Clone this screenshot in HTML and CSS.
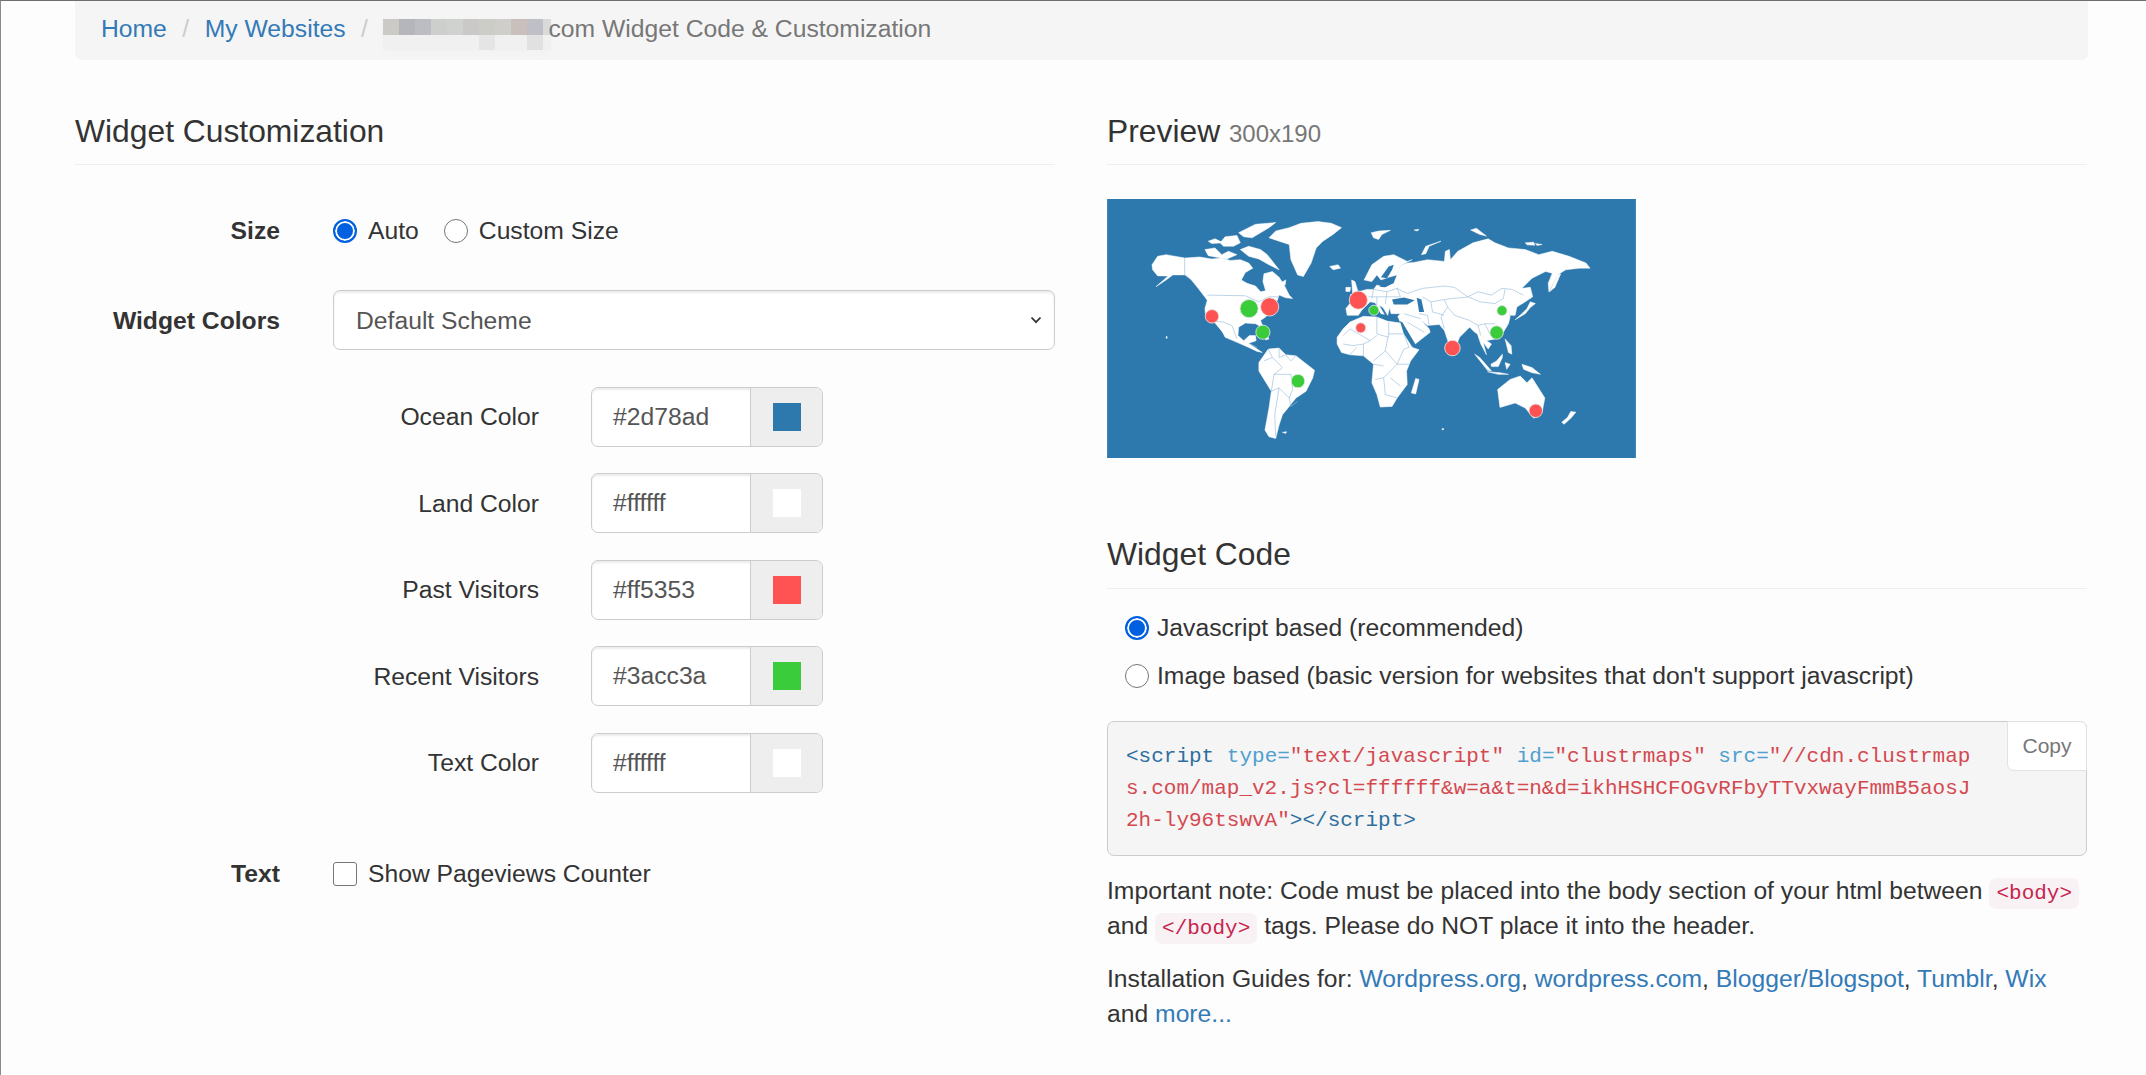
FILE: index.html
```html
<!DOCTYPE html>
<html lang="en">
<head>
    <meta charset="UTF-8">
    <title>Widget Code &amp; Customization</title>
    <link rel="stylesheet" href="styles.css">
</head>
<body>
    <div class="page">
        <ol class="breadcrumb">
            <li><a href="#">Home</a></li>
            <li class="sep">/</li>
            <li><a href="#">My Websites</a></li>
            <li class="sep">/</li>
            <li class="current"><span class="redact"><i></i><i></i><i></i><i></i><i></i><i></i><i></i><i></i><i></i><i></i><i></i><i></i><i></i><i></i><i></i><i></i><i></i><i></i><i></i><i></i><i></i><i></i></span>com Widget Code &amp; Customization</li>
        </ol>

        <div class="columns">
            <!-- left column -->
            <section class="col">
                <h3 class="section-title">Widget Customization</h3>

                <div class="form-row size-row">
                    <label class="row-label">Size</label>
                    <div class="radio-line">
                        <span class="radio checked"></span><span class="radio-text">Auto</span>
                        <span class="radio"></span><span class="radio-text">Custom Size</span>
                    </div>
                </div>

                <div class="form-row scheme-row">
                    <label class="row-label">Widget Colors</label>
                    <div class="select">
                        <span>Default Scheme</span>
                        <svg class="caret" width="12" height="8" viewBox="0 0 12 8"><path d="M1.5 1.5 L6 6.2 L10.5 1.5" fill="none" stroke="#333" stroke-width="1.8"/></svg>
                    </div>
                </div>

                <div class="colors">
                    <div class="color-row">
                        <label>Ocean Color</label>
                        <div class="color-input"><span class="value">#2d78ad</span><span class="addon"><i class="swatch ocean"></i></span></div>
                    </div>
                    <div class="color-row">
                        <label>Land Color</label>
                        <div class="color-input"><span class="value">#ffffff</span><span class="addon"><i class="swatch land"></i></span></div>
                    </div>
                    <div class="color-row">
                        <label>Past Visitors</label>
                        <div class="color-input"><span class="value">#ff5353</span><span class="addon"><i class="swatch past"></i></span></div>
                    </div>
                    <div class="color-row">
                        <label>Recent Visitors</label>
                        <div class="color-input"><span class="value">#3acc3a</span><span class="addon"><i class="swatch recent"></i></span></div>
                    </div>
                    <div class="color-row">
                        <label>Text Color</label>
                        <div class="color-input"><span class="value">#ffffff</span><span class="addon"><i class="swatch land"></i></span></div>
                    </div>
                </div>

                <div class="form-row text-row">
                    <label class="row-label">Text</label>
                    <div class="radio-line">
                        <span class="checkbox"></span><span class="radio-text">Show Pageviews Counter</span>
                    </div>
                </div>
            </section>

            <!-- right column -->
            <section class="col">
                <h3 class="section-title">Preview <small>300x190</small></h3>

                <svg class="map" width="529" height="259" viewBox="0 0 1568 768">
                    <rect width="1568" height="768" fill="#2d78ad"/>
                    <g class="land">
                        <!-- north america -->
                        <path d="M133,195 L150,170 L175,165 L230,175 L275,172 L310,178 L340,175 L365,182 L395,180 L420,190 L432,205 L410,218 L398,240 L415,250 L440,258 L455,275 L470,272 L462,245 L465,222 L490,215 L510,232 L525,255 L540,285 L550,295 L530,293 L510,285 L505,300 L490,325 L470,350 L455,360 L465,385 L480,415 L470,418 L455,378 L440,370 L410,368 L390,380 L388,405 L405,420 L422,405 L440,405 L442,420 L420,428 L445,445 L460,455 L445,452 L420,440 L385,425 L350,410 L335,380 L347,400 L320,368 L292,345 L290,325 L297,300 L270,265 L250,240 L232,225 L195,225 L175,240 L145,260 L170,238 L180,228 L150,228 L135,210 Z"/>
                        <path d="M480,115 L500,95 L540,85 L575,72 L625,67 L665,72 L695,85 L670,105 L640,125 L620,145 L605,190 L582,230 L565,225 L545,180 L540,135 L510,125 Z"/>
                        <path d="M390,100 L440,75 L500,70 L480,85 L455,100 L430,115 L405,112 Z"/>
                        <path d="M395,150 L420,140 L455,150 L475,165 L510,210 L480,195 L450,178 L420,170 Z"/>
                        <path d="M290,150 L320,145 L340,165 L360,155 L385,165 L355,178 L300,168 Z"/>
                        <path d="M300,125 L320,118 L345,130 L310,132 Z"/>
                        <path d="M335,130 L350,112 L385,108 L395,130 L375,140 L345,140 Z"/>
                        <path d="M515,248 L530,240 L528,255 Z"/>
                        <path d="M660,200 L685,195 L692,205 L670,210 Z"/>
                        <path d="M175,408 L178,408 L178,413 L175,413 Z"/>
                        <!-- south america -->
                        <path d="M450,485 L478,445 L510,442 L530,462 L560,465 L615,508 L610,530 L590,570 L560,590 L540,615 L520,640 L510,670 L500,710 L480,705 L468,685 L480,620 L487,570 L450,510 Z"/>
                        <path d="M520,692 L532,690 L530,695 Z"/>
                        <!-- africa -->
                        <path d="M682,410 L700,385 L720,365 L760,348 L800,350 L830,362 L870,368 L880,400 L905,440 L925,447 L900,480 L888,510 L890,550 L860,590 L845,615 L810,617 L800,580 L785,545 L790,490 L760,465 L720,462 L695,455 L682,430 Z"/>
                        <path d="M915,532 L925,535 L915,578 L902,575 Z"/>
                        <!-- eurasia -->
                        <path d="M708,325 L718,312 L735,310 L735,295 L720,285 L745,275 L770,268 L790,268 L800,255 L820,262 L850,250 L860,225 L870,197 L890,190 L910,188 L950,180 L1000,185 L1003,155 L1015,150 L1018,180 L1040,155 L1085,130 L1130,118 L1150,130 L1190,145 L1240,150 L1280,165 L1320,155 L1370,170 L1420,190 L1432,205 L1400,205 L1360,210 L1335,225 L1310,275 L1308,250 L1320,220 L1300,215 L1260,235 L1230,265 L1255,262 L1262,290 L1240,305 L1215,320 L1210,345 L1195,345 L1190,325 L1195,350 L1190,370 L1175,395 L1150,415 L1125,420 L1140,430 L1130,445 L1115,425 L1125,462 L1108,430 L1098,400 L1090,395 L1075,380 L1045,410 L1025,465 L1000,390 L985,372 L950,375 L930,358 L955,385 L958,395 L905,437 L895,420 L870,368 L862,348 L870,340 L842,340 L838,322 L832,345 L818,322 L806,315 L822,342 L812,340 L795,308 L780,305 L755,330 L745,345 L712,345 Z"/>
                        <path d="M762,240 L785,195 L820,170 L850,165 L890,185 L905,180 L870,197 L860,225 L835,232 L812,240 L800,225 L785,245 Z"/>
                        <path d="M725,240 L735,245 L745,278 L728,280 Z"/>
                        <path d="M708,262 L722,262 L720,274 L708,274 Z"/>
                        <path d="M783,100 L805,95 L840,93 L815,105 L805,120 L790,115 Z"/>
                        <path d="M910,92 L925,90 L920,95 Z"/>
                        <path d="M932,165 L945,140 L990,125 L955,140 L945,162 Z"/>
                        <path d="M1078,92 L1095,87 L1125,110 L1105,105 Z"/>
                        <path d="M1240,130 L1265,128 L1268,137 L1245,136 Z"/>
                        <path d="M1270,132 L1290,135 L1275,138 Z"/>
                        <path d="M1312,275 L1335,225 L1345,222 L1328,262 Z"/>
                        <path d="M1210,358 L1240,340 L1255,322 L1270,310 L1255,305 L1245,325 L1232,338 Z"/>
                        <path d="M1180,415 L1198,435 L1200,460 L1190,455 Z"/>
                        <path d="M1138,490 L1155,480 L1172,460 L1172,470 L1160,497 L1140,497 Z"/>
                        <path d="M1090,460 L1105,470 L1140,510 L1128,508 Z"/>
                        <path d="M1128,512 L1165,515 L1190,520 L1160,520 Z"/>
                        <path d="M1180,485 L1195,490 L1185,505 Z"/>
                        <path d="M1230,490 L1260,500 L1285,520 L1260,515 L1235,505 Z"/>
                        <path d="M993,681 L998,681 L998,684 L993,684 Z"/>
                        <!-- oceania -->
                        <path d="M1158,565 L1195,535 L1225,525 L1245,545 L1260,530 L1298,590 L1290,632 L1265,650 L1240,620 L1210,605 L1165,618 Z"/>
                        <path d="M1375,630 L1390,632 L1375,650 L1355,668 L1348,662 L1365,648 Z"/>
                    </g>
                    <g class="sea">
                        <path d="M845,298 L880,292 L912,300 L890,313 L850,313 Z"/>
                        <path d="M918,293 L932,298 L940,335 L925,335 L922,315 Z"/>
                        <path d="M808,260 L830,245 L845,235 L850,248 L825,262 Z"/>
                        <path d="M812,232 L835,200 L850,195 L845,210 L830,235 Z"/>
                        <path d="M868,362 L876,366 L915,432 L905,438 L880,398 Z"/>
                    </g>
                    <g class="border">
                        <path d="M230,175 L230,225 L250,240"/>
                        <path d="M297,285 L410,287 L450,305 L480,290 L510,290"/>
                        <path d="M305,360 L345,365 L370,375 L385,415"/>
                        <path d="M420,428 L445,440"/>
                        <path d="M478,445 L490,470 L465,480 M510,442 L510,470 L530,462 M490,470 L520,500 L495,520 L487,570 L510,560 L540,590 L545,615 L565,600 M495,520 L545,520 L550,565 L540,590 M510,560 L497,640 L500,705 M530,462 L545,480 L560,465"/>
                        <path d="M720,385 L755,405 L780,420 L800,405 M800,350 L800,400 L835,410 M835,365 L835,400 L880,400 M835,400 L825,450 L790,480 M700,430 L730,435 L760,430 L780,420 M720,462 L740,440 M760,465 L760,430 M825,450 L860,490 L820,530 L795,535 M860,490 L895,490 M820,530 L825,580 L860,590 M840,530 L870,555 M880,400 L895,440 M860,490 L880,445 L895,440 M790,490 L820,495 M700,405 L720,385"/>
                        <path d="M935,265 L965,262 L1000,258 L1030,262 L1055,280 L1070,290 L1100,275 L1140,285 L1170,265 L1200,268 L1235,285"/>
                        <path d="M1070,290 L1105,305 L1150,310 L1175,295 L1180,268"/>
                        <path d="M935,290 L960,305 L990,300 L1020,295 L1060,292 L1070,290 M960,305 L965,335 L1000,345 M1000,300 L1010,320 L990,350 L1000,385 M1010,320 L1030,345 L1075,360 L1100,375 L1120,370 L1150,370 M1120,370 L1135,400 M1100,375 L1108,405"/>
                        <path d="M925,340 L950,345 L955,375 M880,340 L930,355 M890,365 L940,395"/>
                        <path d="M790,268 L830,275 L860,265 L890,280 L935,265 M800,290 L870,290 M830,275 L825,310 M860,265 L870,290 M775,290 L800,290 L800,315 M790,268 L785,295"/>
                    </g>
                    <circle cx="311" cy="348" r="20" class="dot past"/>
                    <circle cx="421" cy="325" r="27" class="dot recent"/>
                    <circle cx="482" cy="320" r="27" class="dot past"/>
                    <circle cx="462" cy="395" r="21" class="dot recent"/>
                    <circle cx="566" cy="540" r="20" class="dot recent"/>
                    <circle cx="745" cy="300" r="27" class="dot past"/>
                    <circle cx="791" cy="330" r="15" class="dot recent"/>
                    <circle cx="752" cy="382" r="15" class="dot past"/>
                    <circle cx="1171" cy="331" r="15" class="dot recent"/>
                    <circle cx="1155" cy="396" r="20" class="dot recent"/>
                    <circle cx="1024" cy="442" r="23" class="dot past"/>
                    <circle cx="1271" cy="628" r="20" class="dot past"/>
                </svg>

                <h3 class="section-title code-title">Widget Code</h3>

                <div class="code-options">
                    <div class="radio-line"><span class="radio checked"></span><span class="radio-text">Javascript based (recommended)</span></div>
                    <div class="radio-line"><span class="radio"></span><span class="radio-text">Image based (basic version for websites that don't support javascript)</span></div>
                </div>

                <div class="code-box">
                    <button class="copy">Copy</button>
                    <pre><span class="tag">&lt;script</span> <span class="attr">type=</span><span class="val">"text/javascript"</span> <span class="attr">id=</span><span class="val">"clustrmaps"</span> <span class="attr">src=</span><span class="val">"//cdn.clustrmap</span><span class="val">s.com/map_v2.js?cl=ffffff&amp;w=a&amp;t=n&amp;d=ikhHSHCFOGvRFbyTTvxwayFmmB5aosJ</span><span class="val">2h-ly96tswvA"</span><span class="tag">&gt;&lt;/script&gt;</span></pre>
                </div>

                <p class="note">Important note: Code must be placed into the body section of your html between <code>&lt;body&gt;</code> and <code>&lt;/body&gt;</code> tags. Please do NOT place it into the header.</p>
                <p class="note">Installation Guides for: <a href="#">Wordpress.org</a>, <a href="#">wordpress.com</a>, <a href="#">Blogger/Blogspot</a>, <a href="#">Tumblr</a>, <a href="#">Wix</a> and <a href="#">more...</a></p>
            </section>
        </div>
    </div>
</body>
</html>
```

FILE: styles.css
```css
body {
    margin: 0;
    height: 1075px;
    overflow: hidden;
    box-sizing: border-box;
    background: #fdfdfd;
    border-top: 1px solid #6f6f6f;
    border-left: 1px solid #8a8a8a;
    font-family: "Liberation Sans", Arial, sans-serif;
    font-size: 24.7px;
    line-height: 35px;
    color: #333;
}
a {
    color: #337ab7;
    text-decoration: none;
}
.page {
    padding: 0 58px 0 74px;
}

/* breadcrumb */
.breadcrumb {
    display: flex;
    align-items: center;
    box-sizing: border-box;
    height: 59px;
    margin: 0 0 51px;
    padding: 0 26px 4px;
    list-style: none;
    background: #f5f5f5;
    border-radius: 0 0 7px 7px;
}
.breadcrumb li {
    white-space: nowrap;
}
.breadcrumb .sep {
    margin: 0 15.5px;
    color: #ccc;
}
.breadcrumb .current {
    display: flex;
    align-items: center;
    color: #777;
}
.redact {
    display: grid;
    grid-template-columns: repeat(10, 16px) 8px;
    grid-template-rows: 16px 15px;
    margin: 12px -3px 0 0;
    border-radius: 0 0 8px 8px;
    box-shadow: 0 4px 6px #f2f2f2;
}
.redact i:nth-child(1) { background: #cbcac7; }
.redact i:nth-child(2) { background: #b4b6bc; }
.redact i:nth-child(3) { background: #bcbdc3; }
.redact i:nth-child(4) { background: #cdcfcd; }
.redact i:nth-child(5) { background: #d0d2d0; }
.redact i:nth-child(6) { background: #cbc9c7; }
.redact i:nth-child(7) { background: #cdcdc8; }
.redact i:nth-child(8) { background: #cfcecb; }
.redact i:nth-child(9) { background: #c9c0bd; }
.redact i:nth-child(10) { background: #bfbfc8; }
.redact i:nth-child(11) { background: #d9dbd9; }
.redact i:nth-child(n+12) { background: #f0f0f0; }
.redact i:nth-child(18) { background: #e5e5e5; }
.redact i:nth-child(21) { background: #e0e1e0; }

/* columns */
.columns {
    display: grid;
    grid-template-columns: 980px 980px;
    column-gap: 52px;
}
.section-title {
    margin: 0 0 34px;
    padding-bottom: 13px;
    border-bottom: 1px solid #eee;
    font-size: 31.8px;
    font-weight: 400;
    line-height: 40px;
    color: #333;
}
.section-title small {
    font-size: 24px;
    line-height: 1;
    color: #777;
}

/* left form */
.form-row {
    display: grid;
    grid-template-columns: 205px 1fr;
    column-gap: 53px;
    align-items: center;
}
.row-label {
    font-weight: 700;
    text-align: right;
}
.size-row {
    margin: 48px 0 42px;
}
.scheme-row {
    margin-bottom: 36.5px;
}
.text-row {
    margin-top: 63.5px;
}
.radio-line {
    display: flex;
    align-items: center;
}
.radio {
    flex: none;
    box-sizing: border-box;
    width: 24px;
    height: 24px;
    border: 1px solid #767676;
    border-radius: 50%;
    background: #fff;
}
.radio.checked {
    border: 2px solid #0060df;
    background: #0060df;
    box-shadow: inset 0 0 0 2px #fff;
}
.radio-text {
    margin: 0 25px 0 11px;
}
.checkbox {
    flex: none;
    box-sizing: border-box;
    width: 24px;
    height: 24px;
    border: 1px solid #767676;
    border-radius: 3px;
    background: #fff;
}
.select {
    display: flex;
    align-items: center;
    justify-content: space-between;
    box-sizing: border-box;
    height: 60px;
    padding: 0 12px 0 22px;
    background: #fff;
    border: 1px solid #ccc;
    border-radius: 7px;
    box-shadow: inset 0 2px 2px rgba(0,0,0,.075);
    color: #555;
}

/* colour pickers */
.colors {
    display: grid;
    row-gap: 26.6px;
}
.color-row {
    display: grid;
    grid-template-columns: 464px 232px;
    column-gap: 52px;
    align-items: center;
}
.color-row label {
    text-align: right;
}
.color-input {
    display: flex;
    box-sizing: border-box;
    height: 60px;
    background: #fff;
    border: 1px solid #ccc;
    border-radius: 7px;
    box-shadow: inset 0 2px 2px rgba(0,0,0,.075);
    overflow: hidden;
}
.color-input .value {
    flex: 1;
    padding-left: 21px;
    line-height: 58px;
    color: #555;
}
.addon {
    display: flex;
    align-items: center;
    justify-content: center;
    width: 71px;
    background: #eee;
    border-left: 1px solid #ccc;
}
.swatch {
    display: block;
    width: 28px;
    height: 28px;
}
.ocean { background: #2d78ad; }
.land { background: #fff; }
.past { background: #ff5353; }
.recent { background: #3acc3a; }

/* map */
.map {
    display: block;
    margin-bottom: 76px;
    filter: blur(.35px);
}
.land path {
    fill: #fff;
    stroke: #fff;
    stroke-width: 1.5;
    stroke-linejoin: round;
}
.sea path {
    fill: #2d78ad;
}
.border path {
    fill: none;
    stroke: #9cc0dd;
    stroke-width: 2;
    stroke-linejoin: round;
}
.dot {
    stroke: #e6e6e6;
    stroke-width: 2.5;
}
.dot.past { fill: #ff5353; }
.dot.recent { fill: #3acc3a; }

/* widget code */
.code-title {
    margin-bottom: 21px;
    padding-bottom: 14px;
}
.code-options {
    display: grid;
    row-gap: 13px;
    margin-bottom: 28px;
    padding-left: 18px;
}
.code-options .radio-text {
    margin: 0 0 0 8px;
}
.code-box {
    position: relative;
    box-sizing: border-box;
    height: 135px;
    padding: 19px 18px;
    background: #f5f5f5;
    border: 1px solid #ccc;
    border-radius: 7px;
}
.code-box pre {
    margin: 0;
    width: 850px;
    font-family: "Liberation Mono", monospace;
    font-size: 21px;
    line-height: 32px;
    white-space: pre-wrap;
    word-break: break-all;
}
.tag { color: #2f6f9f; }
.attr { color: #4f9fcf; }
.val { color: #d44950; }
.copy {
    position: absolute;
    top: -1px;
    right: -1px;
    width: 80px;
    height: 50px;
    padding: 0;
    background: #fff;
    border: 1px solid #e1e1e8;
    border-radius: 0 7px 0 7px;
    font-family: inherit;
    font-size: 21px;
    color: #777;
}
.note {
    margin: 0 0 18px;
    padding-top: 17px;
}
.note + .note {
    padding-top: 0;
}
code {
    padding: 4px 7px;
    background: #f9f2f4;
    border-radius: 7px;
    font-family: "Liberation Mono", monospace;
    font-size: 21px;
    line-height: 1;
    color: #c7254e;
}
```
